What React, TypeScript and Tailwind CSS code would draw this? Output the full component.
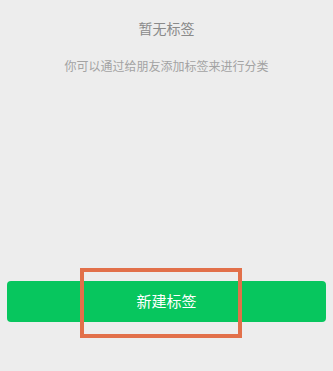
export default function App() {
  return (
    <div
      className="relative flex h-[371px] w-[333px] flex-col bg-[#ededed]"
      style={{ fontFamily: '"Noto Sans CJK SC", "Noto Sans", sans-serif' }}
    >
      <div className="flex flex-col items-center pt-[19px]">
        <h2 className="text-[14px] leading-[18px] text-[#8a8a8a]">暂无标签</h2>
        <p className="mt-[21px] text-[12px] leading-[16px] text-[#a3a3a3]">
          你可以通过给朋友添加标签来进行分类
        </p>
      </div>
      <div className="mt-auto mb-[49px] px-[7px]">
        <button className="flex h-[41px] w-full items-center justify-center rounded-[4px] bg-[#07c65e] text-[15px] text-white">
          新建标签
        </button>
      </div>
      <div className="pointer-events-none absolute left-[80px] top-[268px] h-[70px] w-[162px] border-[4px] border-[#e2704a]" />
    </div>
  );
}
